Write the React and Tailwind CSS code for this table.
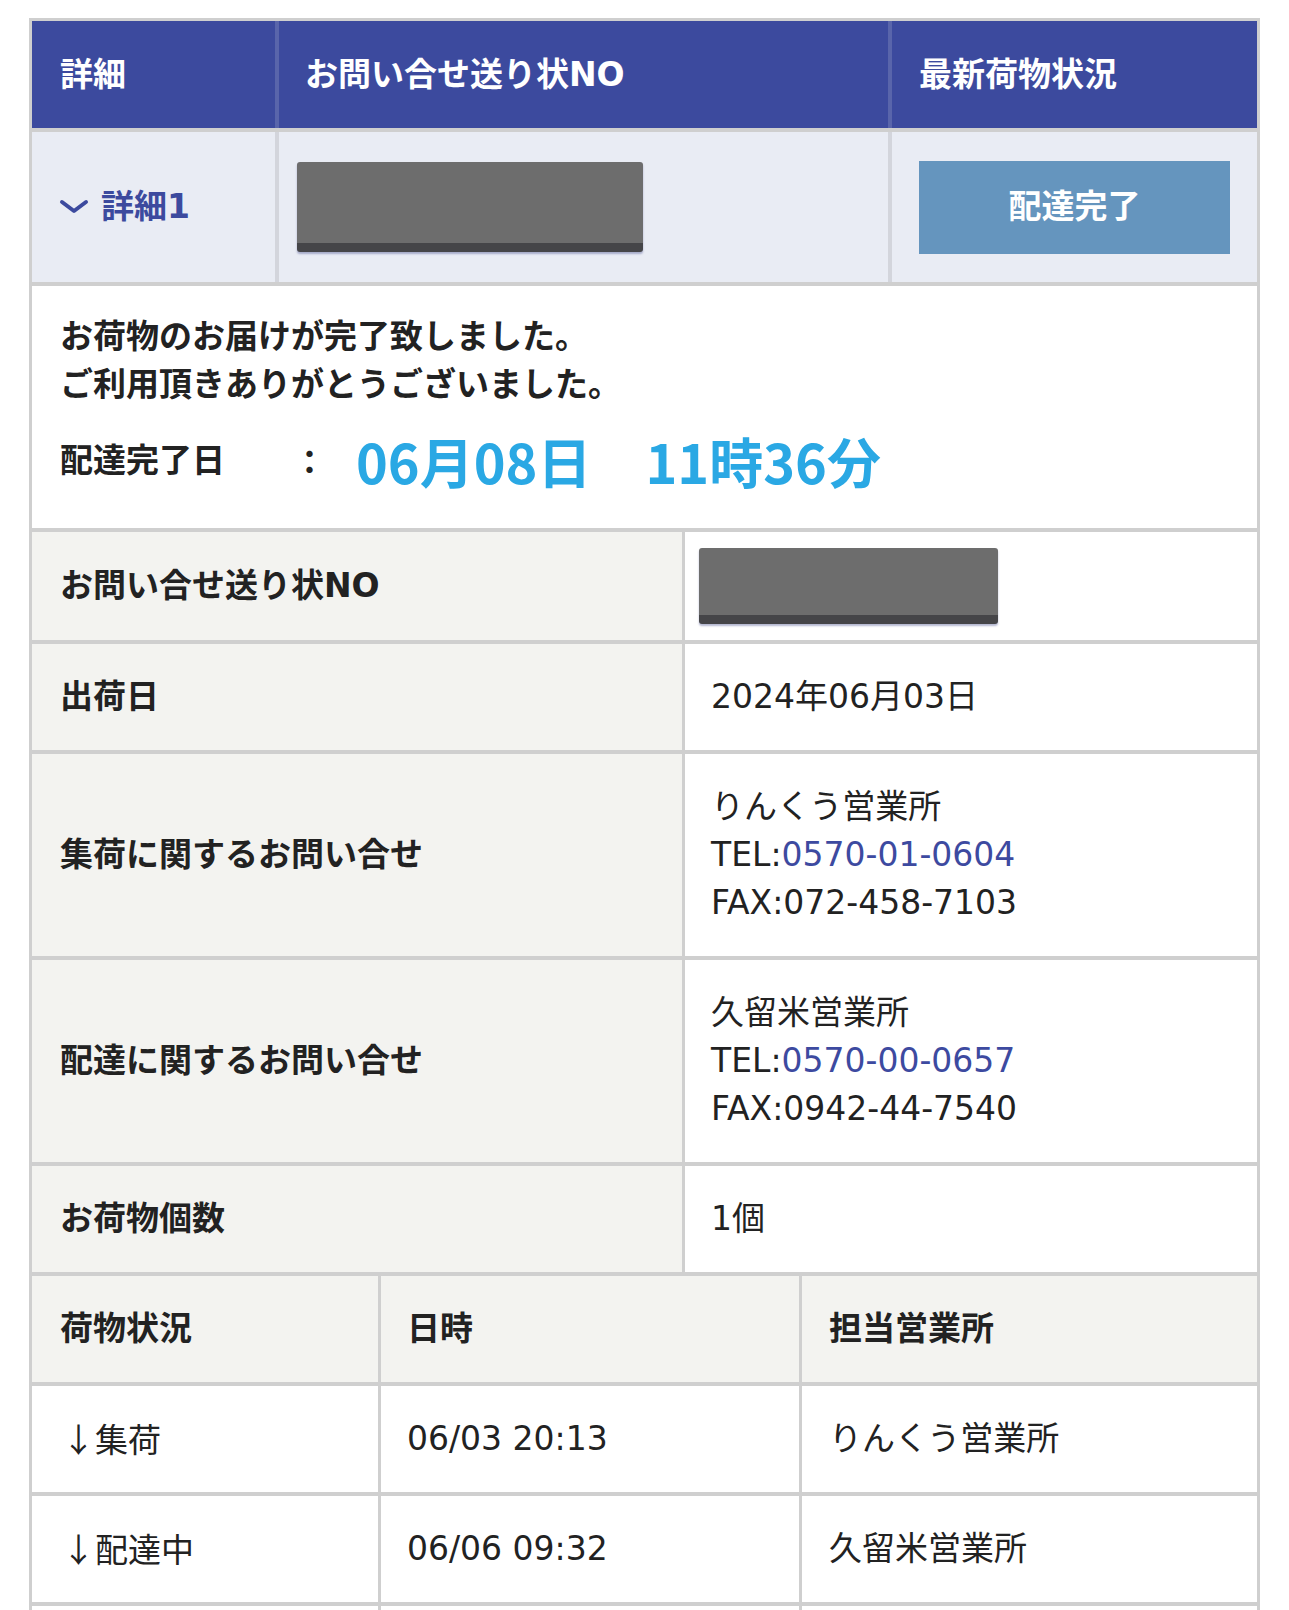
import React from 'react';

const infoRows = [
  { label: 'お問い合せ送り状NO', redacted: true },
  { label: '出荷日', lines: ['2024年06月03日'] },
  {
    label: '集荷に関するお問い合せ',
    office: 'りんくう営業所',
    tel: '0570-01-0604',
    fax: '072-458-7103',
  },
  {
    label: '配達に関するお問い合せ',
    office: '久留米営業所',
    tel: '0570-00-0657',
    fax: '0942-44-7540',
  },
  { label: 'お荷物個数', lines: ['1個'] },
];

const history = [
  { status: '↓集荷', time: '06/03 20:13', office: 'りんくう営業所' },
  { status: '↓配達中', time: '06/06 09:32', office: '久留米営業所' },
  { status: '', time: '', office: '' },
];

function Redacted({ className }) {
  return (
    <div
      className={`rounded-[3px] bg-[#6d6d6d] border-b-[9px] border-[#454548] shadow-[0_2px_2px_rgba(40,50,120,0.35)] ${className}`}
    />
  );
}

export default function App() {
  return (
    <div className="bg-white pt-[18px] font-['DejaVu_Sans','Noto_Sans_CJK_JP',sans-serif] text-[#222]">
      <div className="mx-[29px] border-x-[3px] border-t-[3px] border-[#cfcfcf]">
        {/* header */}
        <div className="flex h-[111px] bg-[#3c4a9e] border-b-[4px] border-[#cfcfcf] text-[33px] font-bold text-white">
          <div className="w-[247px] flex items-center pl-[28px] border-r-[4px] border-[#5965ab]">詳細</div>
          <div className="w-[613px] flex items-center pl-[26px] border-r-[4px] border-[#5965ab]">お問い合せ送り状NO</div>
          <div className="flex-1 flex items-center pl-[27px]">最新荷物状況</div>
        </div>

        {/* summary row */}
        <div className="flex h-[154px] bg-[#e9ecf4] border-b-[4px] border-[#cfcfcf]">
          <div className="w-[247px] flex items-center pl-[27px] gap-[12px] border-r-[4px] border-[#d3d5dc] text-[#3c4a9e] text-[33px] font-bold">
            <svg width="30" height="16" viewBox="0 0 30 16" fill="none">
              <polyline points="3,3 15,12 27,3" stroke="#3c4a9e" strokeWidth="4" strokeLinecap="round" strokeLinejoin="round" />
            </svg>
            <span>詳細1</span>
          </div>
          <div className="w-[613px] flex items-center pl-[18px] border-r-[4px] border-[#d3d5dc]">
            <Redacted className="w-[346px] h-[90px]" />
          </div>
          <div className="flex-1 flex items-center pl-[27px] pr-[27px]">
            <div className="w-full h-[93px] bg-[#6595be] flex items-center justify-center text-white text-[33px] font-bold">
              配達完了
            </div>
          </div>
        </div>

        {/* message */}
        <div className="bg-white border-b-[4px] border-[#cfcfcf] pl-[28px] pt-[27px] pb-[31px]">
          <p className="text-[33px] font-bold leading-[48px]">お荷物のお届けが完了致しました。</p>
          <p className="text-[33px] font-bold leading-[48px]">ご利用頂きありがとうございました。</p>
          <div className="flex items-center mt-[16px]">
            <span className="w-[233px] text-[33px] font-bold">配達完了日</span>
            <span className="text-[33px] font-bold font-['Noto_Sans_CJK_JP',sans-serif]">：</span>
            <span className="ml-[30px] text-[54px] font-bold text-[#2aa8e4] leading-[72px] font-['Noto_Sans_CJK_JP',sans-serif]">
              06月08日　11時36分
            </span>
          </div>
        </div>

        {/* info rows */}
        {infoRows.map((row) => (
          <div key={row.label} className="flex border-b-[4px] border-[#cfcfcf]">
            <div className="w-[653px] flex items-center pl-[28px] bg-[#f3f3f0] border-r-[3px] border-[#cfcfcf] text-[33px] font-bold">
              {row.label}
            </div>
            <div className="flex-1 pl-[26px] py-[29px] text-[33px] leading-[48px]">
              {row.redacted && <Redacted className="w-[299px] h-[76px] -ml-[12px] -my-[13px]" />}
              {row.lines && row.lines.map((l) => <div key={l}>{l}</div>)}
              {row.office && (
                <>
                  <div>{row.office}</div>
                  <div>
                    TEL:<span className="text-[#3d4aa0]">{row.tel}</span>
                  </div>
                  <div>FAX:{row.fax}</div>
                </>
              )}
            </div>
          </div>
        ))}

        {/* history table */}
        <div className="flex h-[110px] bg-[#f3f3f0] border-b-[4px] border-[#cfcfcf] text-[33px] font-bold">
          <div className="w-[349px] flex items-center pl-[28px] border-r-[3px] border-[#cfcfcf]">荷物状況</div>
          <div className="w-[421px] flex items-center pl-[26px] border-r-[3px] border-[#cfcfcf]">日時</div>
          <div className="flex-1 flex items-center pl-[27px]">担当営業所</div>
        </div>
        {history.map((h, i) => (
          <div key={i} className="flex h-[110px] border-b-[4px] border-[#cfcfcf] text-[33px]">
            <div className="w-[349px] flex items-center pl-[30px] border-r-[3px] border-[#cfcfcf] font-['Noto_Sans_CJK_JP',sans-serif]">
              {h.status}
            </div>
            <div className="w-[421px] flex items-center pl-[26px] border-r-[3px] border-[#cfcfcf]">{h.time}</div>
            <div className="flex-1 flex items-center pl-[27px]">{h.office}</div>
          </div>
        ))}
      </div>
    </div>
  );
}
